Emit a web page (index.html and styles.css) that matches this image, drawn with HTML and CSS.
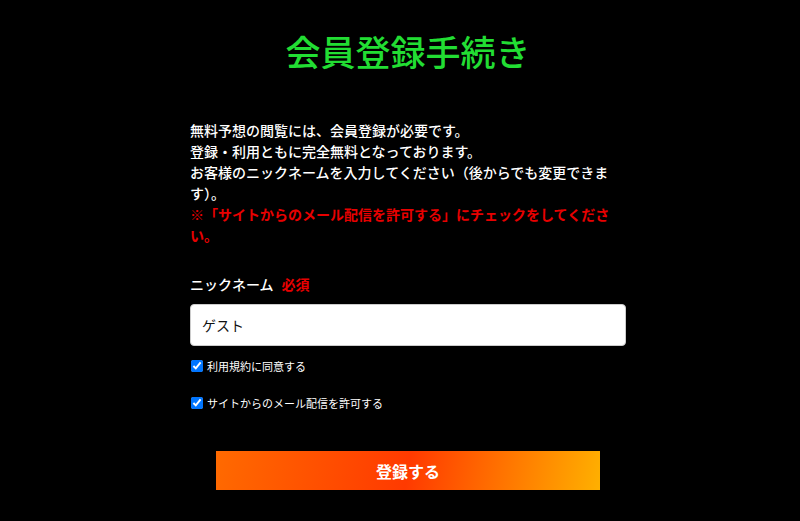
FILE: index.html
```html
<!DOCTYPE html>
<html lang="ja">
<head>
<meta charset="utf-8">
<link rel="stylesheet" href="styles.css">
</head>
<body>
<main class="page">
  <h1 class="title">会員登録手続き</h1>
  <div class="intro">
    <p>無料予想の閲覧には、会員登録が必要です。<br>登録・利用ともに完全無料となっております。<br>お客様のニックネームを入力してください（後からでも変更できます）。</p>
    <p class="notice">※「サイトからのメール配信を許可する」にチェックをしてください。</p>
  </div>
  <form class="form">
    <label class="label">ニックネーム<span class="req">必須</span></label>
    <input class="input" type="text" value="ゲスト">
    <label class="check"><input type="checkbox" checked><span>利用規約に同意する</span></label>
    <label class="check check2"><input type="checkbox" checked><span>サイトからのメール配信を許可する</span></label>
    <button class="submit" type="button">登録する</button>
  </form>
</main>
</body>
</html>
```
FILE: styles.css
```css
html, body {
  margin: 0;
  padding: 0;
  background: #000;
}
body {
  font-family: "Noto Sans CJK JP", "Noto Sans", sans-serif;
  color: #fff;
}
.page {
  width: 436px;
  margin: 0 auto;
  padding-top: 26px;
  padding-left: 16px;
}
.title {
  margin: 0;
  text-align: center;
  font-family: "Noto Sans CJK JP", serif;
  font-weight: 500;
  font-size: 35px;
  line-height: 50px;
  color: #22dd33;
}
.intro {
  margin-top: 44px;
  font-size: 14px;
  line-height: 21px;
  font-weight: 500;
}
.intro p {
  margin: 0;
}
.notice {
  color: #e80000;
  font-weight: 700;
}
.form {
  display: flex;
  flex-direction: column;
  margin-top: 28px;
}
.label {
  font-size: 14px;
  font-weight: 500;
  line-height: 20px;
}
.req {
  color: #e80000;
  font-weight: 700;
  margin-left: 8px;
}
.input {
  margin-top: 10px;
  height: 42px;
  box-sizing: border-box;
  border: 1px solid #ccc;
  border-radius: 4px;
  padding: 0 11px;
  font-family: inherit;
  font-size: 14px;
  color: #111;
  background: #fff;
}
.check {
  display: flex;
  align-items: center;
  font-size: 11px;
  line-height: 18px;
  margin-top: 11px;
}
.check input {
  margin: 0 4px 0 1px;
  width: 12px;
  height: 12px;
}
.check2 {
  margin-top: 19px;
}
.submit {
  align-self: center;
  margin-top: 39px;
  width: 384px;
  height: 39px;
  border: 0;
  border-radius: 0;
  background: linear-gradient(100deg, #ff6a00 0%, #ff3a00 50%, #ffb000 100%);
  color: #fff;
  font-family: inherit;
  font-weight: 700;
  font-size: 16px;
  cursor: pointer;
}
```
